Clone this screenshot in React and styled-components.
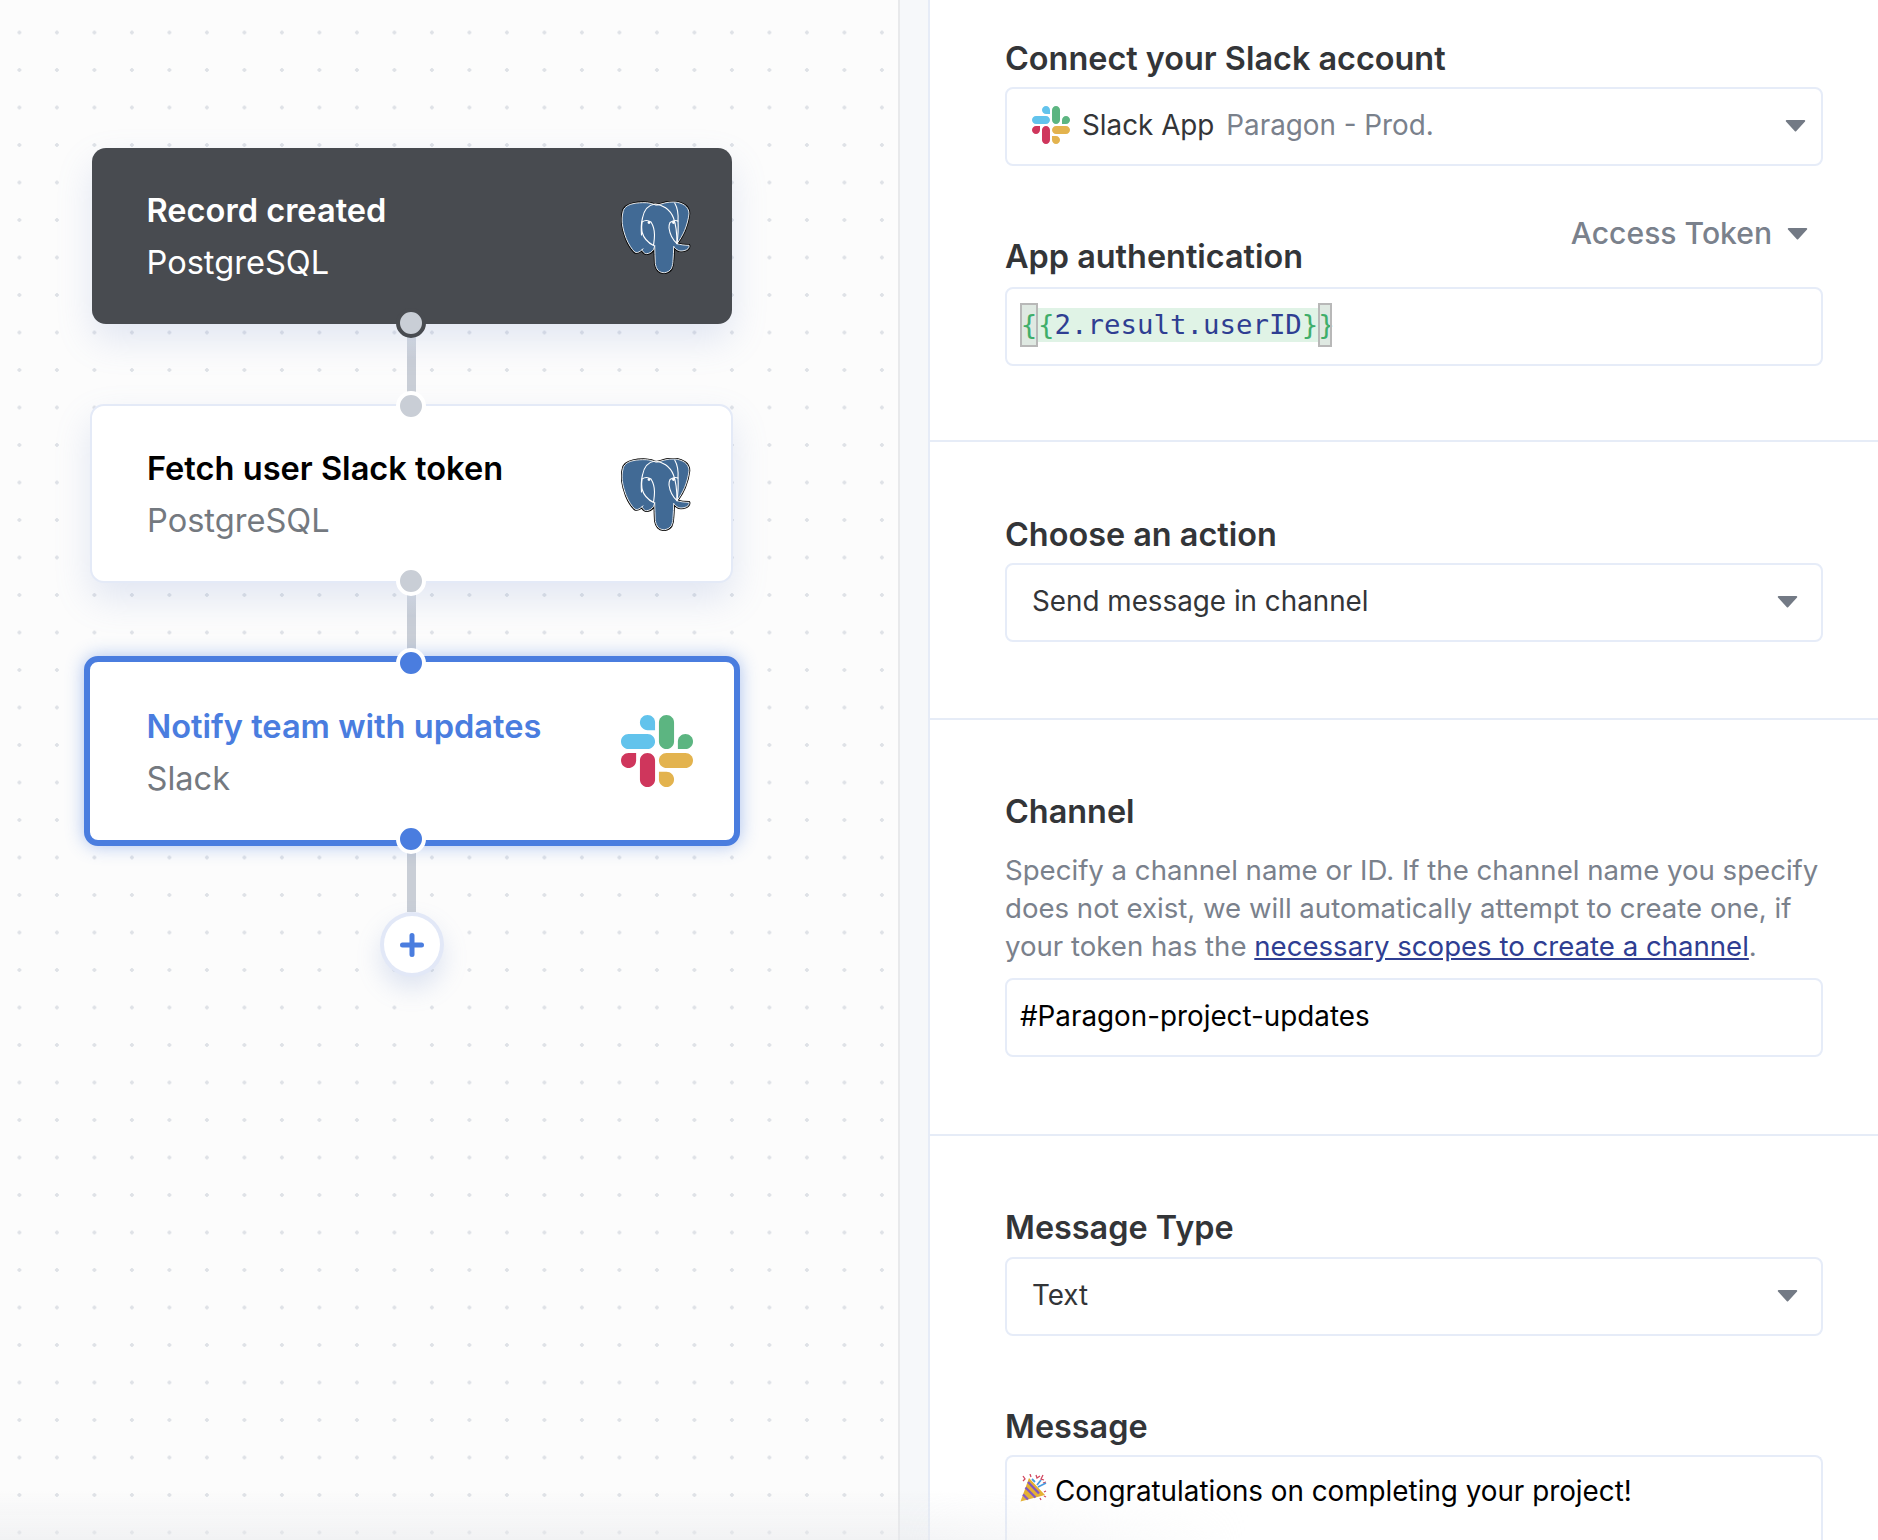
import React from 'react';
import styled, { createGlobalStyle } from 'styled-components';

const GlobalStyle = createGlobalStyle`
  html, body {
    margin: 0;
    padding: 0;
    background: #fff;
    font-family: Inter, "Liberation Sans", sans-serif;
  }
  * { box-sizing: border-box; }
`;

const Page = styled.div`
  position: relative;
  display: flex;
  width: 1878px;
  height: 1540px;
  overflow: hidden;
`;

const Canvas = styled.div`
  width: 900px;
  flex: none;
  display: flex;
  flex-direction: column;
  align-items: center;
  padding: 148px 75px 0 0;
  border-right: 2px solid #e8e9eb;
  background-color: #fcfcfc;
  background-image: radial-gradient(circle, #dfe2e7 1.6px, transparent 2.1px);
  background-size: 37.5px 37.5px;
  background-position: 0.65px 13.75px;
`;

const Gutter = styled.div`
  width: 30px;
  flex: none;
  background: #f6f8fa;
  border-right: 2px solid #e6ecf7;
`;

const Panel = styled.div`
  flex: 1;
  background: #fff;
  display: flex;
  flex-direction: column;
`;

const cardLooks = {
  dark: `
    width: 640px;
    height: 176px;
    padding: 0 41px 0 55px;
    background: #484b50;
    box-shadow: 0 16px 36px rgba(120, 146, 205, 0.2);
  `,
  light: `
    width: 643px;
    height: 179px;
    padding: 1px 40px 0 55px;
    background: #fff;
    border: 2px solid #e4eaf7;
    box-shadow: 0 16px 36px rgba(120, 146, 205, 0.2);
  `,
  active: `
    width: 656px;
    height: 190px;
    padding: 2px 41px 0 57px;
    background: #fff;
    border: 6px solid #4a7ddf;
    box-shadow: 0 0 18px rgba(74, 125, 223, 0.45);
  `,
};

const Card = styled.div`
  position: relative;
  flex: none;
  display: flex;
  align-items: center;
  justify-content: space-between;
  border-radius: 14px;
  ${(p) => cardLooks[p.$look]}
`;

const CardText = styled.div`
  display: flex;
  flex-direction: column;
  gap: 13px;
`;

const titleColors = { dark: '#fff', light: '#000', active: '#4a7ddf' };

const CardTitle = styled.div`
  font-size: 32.6px;
  line-height: 39px;
  font-weight: 600;
  color: ${(p) => titleColors[p.$look]};
`;

const CardSub = styled.div`
  font-size: 32.6px;
  line-height: 39px;
  font-weight: 400;
  color: ${(p) => (p.$look === 'dark' ? '#fff' : '#74797f')};
`;

const Handle = styled.span`
  position: absolute;
  left: 50%;
  width: 30px;
  height: 30px;
  margin-left: -16px;
  border-radius: 50%;
  background: ${(p) => (p.$on ? '#4a7ddf' : '#c9ced6')};
  border: 4px solid ${(p) => p.$ring};
  ${(p) => (p.$side === 'top' ? `top: ${p.$offset}px;` : `bottom: ${p.$offset}px;`)}
  z-index: 2;
`;

const Wire = styled.div`
  flex: none;
  width: 9px;
  height: ${(p) => p.$h}px;
  margin-right: 1px;
  background: ${(p) => (p.$fade ? 'linear-gradient(#dde1e8, #c9ced6 45%)' : '#c9ced6')};
`;

const AddButton = styled.button`
  flex: none;
  width: 64px;
  height: 65px;
  padding: 0;
  display: flex;
  align-items: center;
  justify-content: center;
  border-radius: 50%;
  background: #fff;
  border: 4px solid #e2e8f7;
  box-shadow: 0 12px 24px rgba(120, 146, 205, 0.22);
`;

const Section = styled.section`
  height: ${(p) => p.$h}px;
  flex: none;
  padding: ${(p) => p.$top}px 55px 0 75px;
  border-bottom: ${(p) => (p.$open ? 'none' : '2px solid #e6ecf7')};
`;

const Label = styled.div`
  font-size: 32.4px;
  line-height: 39px;
  font-weight: 600;
  color: #333538;
  margin-top: ${(p) => p.$top || 0}px;
  margin-bottom: ${(p) => (p.$gap === undefined ? 9 : p.$gap)}px;
`;

const LabelRow = styled.div`
  display: flex;
  justify-content: space-between;
  align-items: flex-end;
  margin: 49px 0 11px;
`;

const AuthType = styled.div`
  display: flex;
  align-items: center;
  gap: 15px;
  margin-bottom: 24px;
  padding-right: 15px;
  font-size: 30.1px;
  line-height: 37px;
  font-weight: 500;
  color: #7a818c;
`;

const Field = styled.div`
  width: 818px;
  height: 79px;
  display: flex;
  align-items: center;
  gap: ${(p) => p.$gap || 0}px;
  padding: 0 15px 3px ${(p) => p.$left}px;
  background: #fff;
  border: 2px solid #e6ecf8;
  border-radius: 8px;
  font-size: 27.8px;
  color: ${(p) => p.$color || '#333538'};
`;

const MessageField = styled(Field)`
  height: 120px;
  align-items: flex-start;
  padding-top: 17px;
  border-bottom: none;
  border-radius: 8px 8px 0 0;
`;

const Muted = styled.span`
  color: #7a818c;
`;

const Caret = styled.svg`
  margin-left: auto;
  margin-right: ${(p) => p.$right || 0}px;
  flex: none;
`;

const Code = styled.div`
  display: flex;
  align-items: center;
  height: 44px;
  font-family: "DejaVu Sans Mono", "Liberation Mono", monospace;
  font-size: 27.4px;
  color: #2f3e92;
`;

const CodeInner = styled.span`
  display: inline-block;
  height: 34px;
  line-height: 34px;
  background: #e0f3e6;
`;

const Brace = styled.span`
  color: #3fae6a;
`;

const MatchBrace = styled.span`
  display: inline-block;
  width: ${(p) => p.$w}px;
  height: 44px;
  line-height: 44px;
  text-align: center;
  color: #3fae6a;
  background: #dfe9e2;
  outline: 2px solid #b8b8b8;
  outline-offset: -2px;
`;

const Help = styled.p`
  margin: 20px 0 13px;
  font-size: 27.6px;
  line-height: 38px;
  color: #7a818c;
`;

const HelpLink = styled.a`
  color: #2f3e92;
  text-decoration: underline;
`;

const BottomFade = styled.div`
  position: absolute;
  left: 0;
  bottom: 0;
  width: 1250px;
  height: 50px;
  pointer-events: none;
  background: linear-gradient(to top, rgba(232, 233, 236, 0.5), rgba(232, 233, 236, 0));
  mask-image: linear-gradient(to right, #000 72%, transparent);
`;

const Logo = styled.svg`
  flex: none;
  margin-top: ${(p) => p.$shift || 0}px;
`;

const SlackLogo = ({ size, shift }) => (
  <Logo $shift={shift} width={size} height={size} viewBox="0 0 122.8 122.8">
    <path fill="#cf365c" d="M25.8 77.6c0 7.1-5.8 12.9-12.9 12.9S0 84.7 0 77.6s5.8-12.9 12.9-12.9h12.9v12.9z" />
    <path fill="#cf365c" d="M32.3 77.6c0-7.1 5.8-12.9 12.9-12.9s12.9 5.8 12.9 12.9v32.3c0 7.1-5.8 12.9-12.9 12.9s-12.9-5.8-12.9-12.9V77.6z" />
    <path fill="#62c3ec" d="M45.2 25.8c-7.1 0-12.9-5.8-12.9-12.9S38.1 0 45.2 0s12.9 5.8 12.9 12.9v12.9H45.2z" />
    <path fill="#62c3ec" d="M45.2 32.3c7.1 0 12.9 5.8 12.9 12.9s-5.8 12.9-12.9 12.9H12.9C5.8 58.1 0 52.3 0 45.2s5.8-12.9 12.9-12.9h32.3z" />
    <path fill="#5cb581" d="M97 45.2c0-7.1 5.8-12.9 12.9-12.9s12.9 5.8 12.9 12.9-5.8 12.9-12.9 12.9H97V45.2z" />
    <path fill="#5cb581" d="M90.5 45.2c0 7.1-5.8 12.9-12.9 12.9s-12.9-5.8-12.9-12.9V12.9C64.7 5.8 70.5 0 77.6 0s12.9 5.8 12.9 12.9v32.3z" />
    <path fill="#e3b34e" d="M77.6 97c7.1 0 12.9 5.8 12.9 12.9s-5.8 12.9-12.9 12.9-12.9-5.8-12.9-12.9V97h12.9z" />
    <path fill="#e3b34e" d="M77.6 90.5c-7.1 0-12.9-5.8-12.9-12.9s5.8-12.9 12.9-12.9h32.3c7.1 0 12.9 5.8 12.9 12.9s-5.8 12.9-12.9 12.9H77.6z" />
  </Logo>
);

// traced from the reference, 68x71 with a 1px margin for the outline
const ELEPHANT =
  'M11 1.7C5 3 1.5 6 1 10C0 14 0 18 .3 21.7C1 27 2.5 32 4.3 36.7C6.5 42 9.5 47 12.7 50C14.5 51 16.5 50.5 18.5 49C19.5 48 20.5 47.5 21 46.7C20 48 20 48.5 20.3 48.5C21.5 50.5 23 51.7 24.3 51.7C27 51.7 30 50 31.5 47.5C32 46 32.5 45 32.7 43.3C32.8 49 33 56 33.3 61.7C33.8 64.5 34.8 66.8 36 68.3C38 70.2 40.5 70.9 42.7 70.7C45.5 70.3 48 68.8 49.3 66.7C50.5 64 51 61 51 58.3C51.4 53.5 51.6 49 51.7 44.3C52.3 45.3 53 46.2 53.7 46.7C55.5 48.3 57.5 49 59 49C61.5 49 64.5 48.2 66 46.7C67 45.6 67.3 44.5 67 43.3C63 43.3 58.5 42.8 55 41.7C57.7 38 60.8 33 62.7 28.3C64.8 23 66.5 17 67 11.7C67 8 65.2 5 62.7 3.3C59.5 1.2 56 .2 52.7 0C49 0 45.5 .2 42.7 1C39.8 1.8 37 2.6 34.3 3.3C31 1.8 27.5 .9 24.3 .7C19.5 .5 15 .8 11 1.7z';

const PostgresLogo = ({ shift }) => (
  <Logo $shift={shift} width="70" height="73" viewBox="-1 -1 70 73">
    <path d={ELEPHANT} fill="#000" stroke="#000" strokeWidth="2.6" strokeLinejoin="round" />
    <path d={ELEPHANT} fill="#416a95" stroke="#fff" strokeWidth="0.9" strokeLinejoin="round" />
    <g fill="none" stroke="#fff" strokeWidth="1.1" strokeLinecap="round" strokeLinejoin="round">
      <path d="M19.5 33C19 27 19 22 20.5 16C22 8 26 3 33 2C40 2.5 48 7 51.5 16C54.5 24 55 32 55 41.7" />
      <path d="M20 20C22.5 18.3 26 18 29 20C31.5 24 32.5 28 32.5 33C32.5 37 32 40 31.5 43.5C26.5 41 22 37 20 30C19.6 27 19.6 23 20 20z" />
      <path d="M48 20.5C51 18.5 54 18 56 19C56.5 26 56 34 55 41.7C51 38 48 33.5 47 26C47 24 47.2 22 48 20.5z" />
      <path d="M52.7 1C55 5 56.5 12 56 19" />
    </g>
    <circle cx="27" cy="20.5" r="1.4" fill="#fff" />
    <circle cx="51.5" cy="20.5" r="1.4" fill="#fff" />
  </Logo>
);

const PlusIcon = () => (
  <svg width="24" height="24" viewBox="0 0 24 24">
    <path d="M12 2.5v19M2.5 12h19" stroke="#4a7ddf" strokeWidth="5" strokeLinecap="round" />
  </svg>
);

const CaretIcon = ({ right }) => (
  <Caret $right={right} width="21" height="13" viewBox="0 0 20 12.4">
    <path d="M1.5 1h17a.8.8 0 0 1 .6 1.3l-8.5 9.4a.8.8 0 0 1-1.2 0L.9 2.3A.8.8 0 0 1 1.5 1z" fill="#737a85" />
  </Caret>
);

const PartyPopper = () => (
  <Logo width="28" height="28" viewBox="0 0 28 28">
    <path d="M.5 27.5 9 4l16 17z" fill="#e6b030" />
    <path d="M3 20.5 8 25.5M5.5 13.5l10 10M8 8l11 11.5" stroke="#8256c0" strokeWidth="2.4" />
    <path d="M3 2l2 3-2 2M10 0l1 3M16 1l1 3 3-2M23 1l-2 4 3 1M26 8l-3 1M26 17l-2 1M26 23l-2-1M21 26l-1-2" fill="none" stroke="#d1465f" strokeWidth="1.3" />
    <path d="M12 5l3 3M18 13l8-4M21 6l-4 5" fill="none" stroke="#4a9be0" strokeWidth="1.8" />
  </Logo>
);

const App = () => {
  return (
    <Page>
      <GlobalStyle />
      <Canvas>
        <Card $look="dark">
          <CardText>
            <CardTitle $look="dark">Record created</CardTitle>
            <CardSub $look="dark">PostgreSQL</CardSub>
          </CardText>
          <PostgresLogo shift={2} />
          <Handle $side="bottom" $offset={-14} $ring="#484b50" />
        </Card>
        <Wire $h={80} $fade />
        <Card $look="light">
          <CardText>
            <CardTitle $look="light">Fetch user Slack token</CardTitle>
            <CardSub $look="light">PostgreSQL</CardSub>
          </CardText>
          <PostgresLogo />
          <Handle $side="top" $offset={-15} $ring="#fff" />
          <Handle $side="bottom" $offset={-15} $ring="#fff" />
        </Card>
        <Wire $h={73} $fade />
        <Card $look="active">
          <CardText>
            <CardTitle $look="active">Notify team with updates</CardTitle>
            <CardSub $look="active">Slack</CardSub>
          </CardText>
          <SlackLogo size={72} shift={-2} />
          <Handle $side="top" $offset={-14} $on $ring="#fff" />
          <Handle $side="bottom" $offset={-14} $on $ring="#fff" />
        </Card>
        <Wire $h={66} />
        <AddButton>
          <PlusIcon />
        </AddButton>
      </Canvas>
      <Gutter />
      <Panel>
        <Section $h={442} $top={39}>
          <Label>Connect your Slack account</Label>
          <Field $left={25} $gap={12}>
            <SlackLogo size={38} />
            <span>Slack App</span>
            <Muted>Paragon - Prod.</Muted>
            <CaretIcon />
          </Field>
          <LabelRow>
            <Label $gap={0}>App authentication</Label>
            <AuthType>
              Access Token
              <CaretIcon />
            </AuthType>
          </LabelRow>
          <Field $left={13}>
            <Code>
              <MatchBrace $w={18}>{'{'}</MatchBrace>
              <CodeInner>
                <Brace>{'{'}</Brace>2.result.userID<Brace>{'}'}</Brace>
              </CodeInner>
              <MatchBrace $w={14}>{'}'}</MatchBrace>
            </Code>
          </Field>
        </Section>
        <Section $h={278} $top={73}>
          <Label>Choose an action</Label>
          <Field $left={25}>
            Send message in channel
            <CaretIcon right={8} />
          </Field>
        </Section>
        <Section $h={416} $top={72}>
          <Label>Channel</Label>
          <Help>
            Specify a channel name or ID. If the channel name you specify does not exist, we will automatically attempt to
            create one, if your token has the <HelpLink>necessary scopes to create a channel</HelpLink>.
          </Help>
          <Field $left={13} $color="#000">#Paragon-project-updates</Field>
        </Section>
        <Section $h={404} $top={72} $open>
          <Label $gap={10}>Message Type</Label>
          <Field $left={25}>
            Text
            <CaretIcon right={8} />
          </Field>
          <Label $top={71}>Message</Label>
          <MessageField $left={13} $gap={7} $color="#000">
            <PartyPopper />
            Congratulations on completing your project!
          </MessageField>
        </Section>
      </Panel>
      <BottomFade />
    </Page>
  );
};

export default App;
